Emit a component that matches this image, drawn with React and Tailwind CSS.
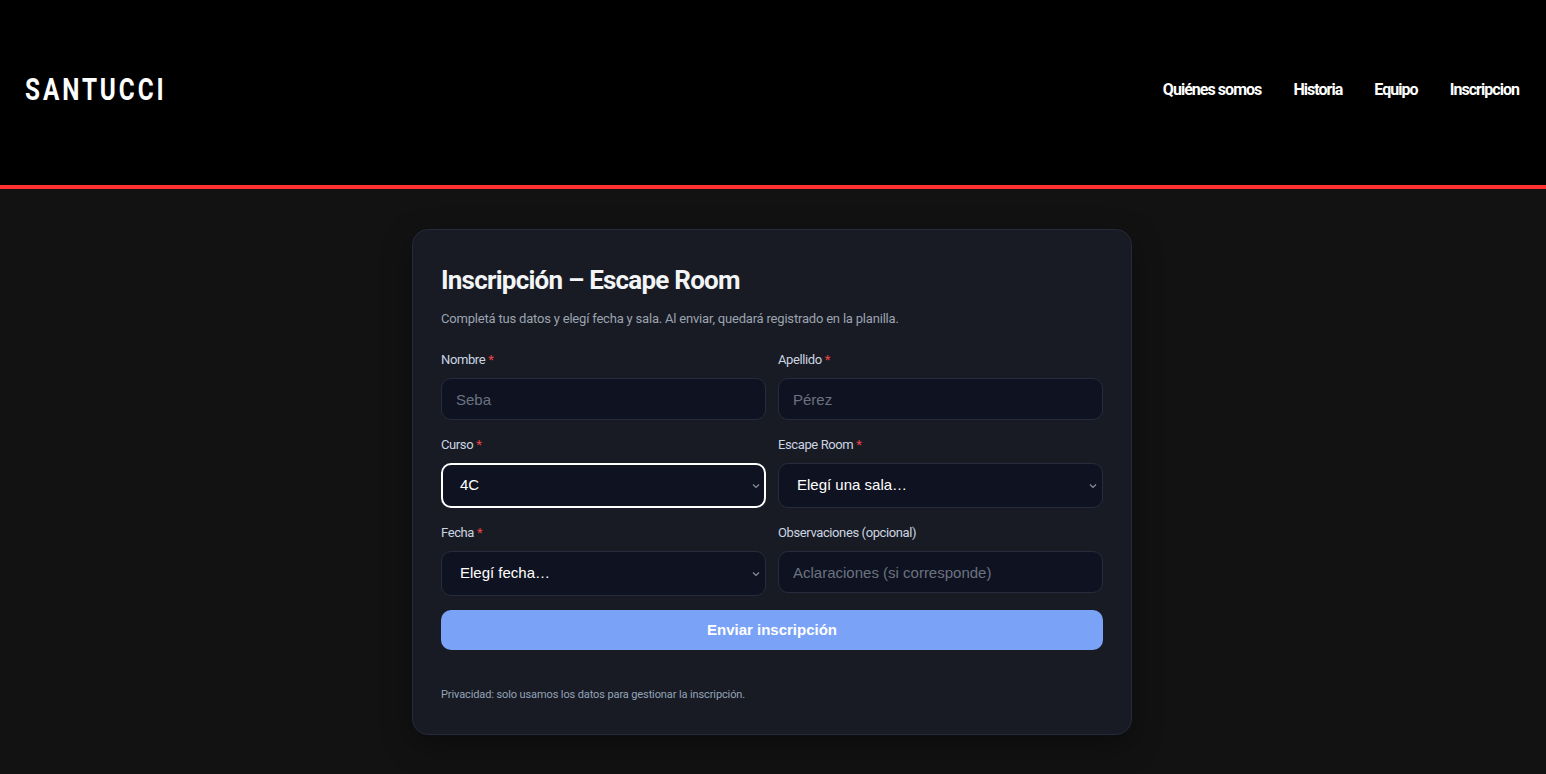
import React from 'react';

const Chevron = () => (
  <svg
    className="pointer-events-none absolute right-[6px] top-1/2 -translate-y-1/2"
    width="8"
    height="5"
    viewBox="0 0 8 5"
    fill="none"
  >
    <path d="M1 1l3 3 3-3" stroke="#8d8f99" strokeWidth="1.2" />
  </svg>
);

const Label = ({ children, required }) => (
  <label className="mb-[10px] block h-4 text-[13px] leading-4 tracking-[-0.03em] text-[#cbd5e1]">
    {children}
    {required && <span className="ml-[3px] text-[#ef4444]">*</span>}
  </label>
);

const inputCls =
  "h-[42px] w-full rounded-[10px] border border-[#272b3d] bg-[#0f1220] px-[14px] font-['Liberation_Sans',Arial,sans-serif] text-[15px] text-white outline-none placeholder:text-[#6b7280]";

const Select = ({ children, focused }) => (
  <div className="relative">
    <select
      defaultValue=""
      className={
        "h-[45px] w-full appearance-none rounded-[10px] bg-[#0f1220] font-['Liberation_Sans',Arial,sans-serif] text-[15px] text-white outline-none " +
        (focused ? 'border-2 border-white px-[17px]' : 'border border-[#272b3d] px-[18px]')
      }
    >
      {children}
    </select>
    <Chevron />
  </div>
);

export default function App() {
  return (
    <div className="min-h-screen bg-[#121212] font-['Roboto',sans-serif]">
      <header className="flex h-[189px] items-center justify-between border-b-4 border-[#ff3131] bg-black pb-[6px] pl-[25px] pr-[27px]">
        <div className="w-[136px]">
          <div className="inline-block origin-left scale-x-[0.76] whitespace-nowrap text-[32px] font-bold leading-none tracking-[0.12em] text-white">
            SANTUCCI
          </div>
        </div>
        <nav className="flex gap-8 text-[16px] font-bold tracking-[-0.06em] text-white">
          <a href="#">Quiénes somos</a>
          <a href="#">Historia</a>
          <a href="#">Equipo</a>
          <a href="#">Inscripcion</a>
        </nav>
      </header>

      <main className="px-4 pt-10 pb-10">
        <div className="mx-auto w-[720px] -translate-x-px rounded-2xl border border-[#262a3a] bg-[#181b24] px-7 pt-[34px] pb-8 shadow-[0_10px_30px_rgba(0,0,0,0.35)]">
          <h1 className="text-[26px] font-bold leading-8 tracking-[-0.03em] text-[#f3f4f6]">Inscripción – Escape Room</h1>
          <p className="mt-[14px] text-[13px] leading-[18px] tracking-[-0.015em] text-[#9ca3af]">
            Completá tus datos y elegí fecha y sala. Al enviar, quedará registrado en la planilla.
          </p>

          <form className="mt-6 grid grid-cols-2 gap-x-3 gap-y-[17px]">
            <div>
              <Label required>Nombre</Label>
              <input className={inputCls} placeholder="Seba" />
            </div>
            <div>
              <Label required>Apellido</Label>
              <input className={inputCls} placeholder="Pérez" />
            </div>
            <div>
              <Label required>Curso</Label>
              <Select focused>
                <option value="">4C</option>
              </Select>
            </div>
            <div>
              <Label required>Escape Room</Label>
              <Select>
                <option value="">Elegí una sala…</option>
              </Select>
            </div>
            <div>
              <Label required>Fecha</Label>
              <Select>
                <option value="">Elegí fecha…</option>
              </Select>
            </div>
            <div>
              <Label>Observaciones (opcional)</Label>
              <input className={inputCls} placeholder="Aclaraciones (si corresponde)" />
            </div>
            <button
              type="button"
              className="col-span-2 -mt-[3px] h-10 rounded-[10px] bg-[#7aa2f7] font-['Liberation_Sans',Arial,sans-serif] text-[15px] font-bold text-white"
            >
              Enviar inscripción
            </button>
          </form>

          <p className="mt-[38px] text-[11px] leading-[14px] tracking-[-0.01em] text-[#94a3b8]">
            Privacidad: solo usamos los datos para gestionar la inscripción.
          </p>
        </div>
      </main>
    </div>
  );
}
